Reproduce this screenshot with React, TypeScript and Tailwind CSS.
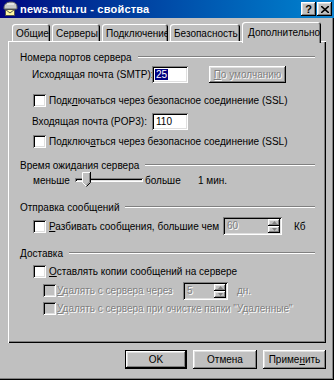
import React from 'react';

const raised = 'shadow-[inset_-1px_-1px_#000,inset_1px_1px_#fff,inset_-2px_-2px_#808080,inset_2px_2px_#dfdfdf]';
const sunken = 'shadow-[inset_1px_1px_#808080,inset_-1px_-1px_#fff,inset_2px_2px_#000,inset_-2px_-2px_#dfdfdf]';
const dis = 'text-[#808080] [text-shadow:1px_1px_0_#fff]';

function Check({ disabled = false }: { disabled?: boolean }) {
    return <div className={`w-[13px] h-[13px] shrink-0 ${disabled ? 'bg-[#c0c0c0]' : 'bg-white'} ${sunken}`} />;
}

function GroupLabel({ text }: { text: string }) {
    return (
        <div className="flex items-center h-[14px]">
            <span className="pr-[6px]">{text}</span>
            <div className="flex-1 h-[2px] border-t border-[#808080] border-b border-b-white" />
        </div>
    );
}

function Spinner({ value, w }: { value: string; w: string }) {
    return (
        <div className={`flex shrink-0 h-[18px] bg-[#c0c0c0] ${sunken} ${w} p-[2px]`}>
            <div className={`flex-1 pl-[2px] leading-[14px] ${dis}`}>{value}</div>
            <div className="flex flex-col w-[12px]">
                <div className={`flex-1 ${raised} flex items-center justify-center`}>
                    <svg width="5" height="3" viewBox="0 0 5 3"><path d="M2.5 0L5 3H0z" fill="#808080" /></svg>
                </div>
                <div className={`flex-1 ${raised} flex items-center justify-center`}>
                    <svg width="5" height="3" viewBox="0 0 5 3"><path d="M0 0H5L2.5 3z" fill="#808080" /></svg>
                </div>
            </div>
        </div>
    );
}

function Tab({ label, w, active = false }: { label: string; w: string; active?: boolean }) {
    return (
        <div
            className={`${w} shrink-0 whitespace-nowrap overflow-hidden rounded-t-[3px] bg-[#c0c0c0] shadow-[inset_1px_1px_#fff,inset_-1px_0_#000,inset_-2px_0_#808080] ${
                active ? 'h-[21px] relative z-10 -mb-[2px] pl-[6px] pt-[3px]' : 'h-[17px] pl-[4px] pt-[2px]'
            }`}
        >
            {label}
        </div>
    );
}

export default function App() {
    return (
        <div
            className="w-[334px] h-[380px] bg-[#c0c0c0] flex flex-col text-[10px] text-black whitespace-nowrap overflow-hidden shadow-[inset_-1px_-1px_#000,inset_-2px_-2px_#808080]"
            style={{ fontFamily: '"Liberation Sans", Arial, sans-serif' }}
        >
            {/* Title bar */}
            <div className="h-[18px] flex items-center bg-gradient-to-r from-[#000080] to-[#1084d0] pl-[2px] pr-[2px] shrink-0">
                <svg width="16" height="16" viewBox="0 0 16 16" className="shrink-0">
                    <path d="M2 7C2 3 5 1 9 1C13 1 15 3 15 6L15 8L2 8Z" fill="#c8c8c8" stroke="#606060" strokeWidth="1" />
                    <path d="M5 3H12" stroke="#fff" strokeWidth="1" />
                    <rect x="3.5" y="8.5" width="9" height="6" fill="#fff8a0" stroke="#505050" />
                    <path d="M3.5 8.5L8 12L12.5 8.5" fill="none" stroke="#505050" />
                </svg>
                <span className="ml-[2px] text-white font-bold text-[11px] tracking-[0.2px]">news.mtu.ru - свойства</span>
                <div className="ml-auto flex gap-[1px]">
                    <div className={`w-[15px] h-[14px] bg-[#c0c0c0] ${raised} flex items-center justify-center font-bold text-[11px] leading-none`}>?</div>
                    <div className={`w-[15px] h-[14px] bg-[#c0c0c0] ${raised} flex items-center justify-center`}>
                        <svg width="8" height="7" viewBox="0 0 8 7">
                            <path d="M0 0L8 7M8 0L0 7" stroke="#000" strokeWidth="1.6" />
                        </svg>
                    </div>
                </div>
            </div>

            <div className="flex flex-col px-[8px] pt-[4px]">
                {/* Tabs */}
                <div className="flex items-end h-[19px] pl-[4px] gap-[2px]">
                    <Tab label="Общие" w="w-[38px]" />
                    <Tab label="Серверы" w="w-[48px]" />
                    <Tab label="Подключение" w="w-[66px]" />
                    <Tab label="Безопасность" w="w-[70px]" />
                    <Tab label="Дополнительно" w="w-[79px]" active />
                </div>

                {/* Panel */}
                <div className="h-[302px] flex flex-col pl-[12px] pr-[11px] pt-[9px] shadow-[inset_1px_1px_#fff,inset_-1px_-1px_#000,inset_-2px_-2px_#808080]">
                    <GroupLabel text="Номера портов сервера" />
                    <div className="flex items-center h-[17px] mt-[2px] pl-[12px]">
                        <span className="w-[120px] shrink-0">Исходящая почта (SMTP):</span>
                        <div className={`w-[36px] h-[17px] shrink-0 bg-white ${sunken} p-[3px] flex items-center`}>
                            <span className="bg-[#000080] text-white leading-[11px] px-[1px]">25</span>
                        </div>
                        <div className={`ml-[21px] w-[77px] h-[17px] shrink-0 ${raised} flex items-center justify-center ${dis}`}>
                            <span><u>П</u>о умолчанию</span>
                        </div>
                    </div>
                    <div className="flex items-center h-[14px] mt-[10px] pl-[13px] gap-[3px]">
                        <Check />
                        <span>Подк<u>л</u>ючаться через безопасное соединение (SSL)</span>
                    </div>
                    <div className="flex items-center h-[17px] mt-[6px] pl-[12px]">
                        <span className="w-[120px] shrink-0">Входящая почта (POP3):</span>
                        <div className={`w-[36px] h-[17px] shrink-0 bg-white ${sunken} pl-[4px] flex items-center`}>110</div>
                    </div>
                    <div className="flex items-center h-[14px] mt-[4px] pl-[13px] gap-[3px]">
                        <Check />
                        <span>Подключ<u>а</u>ться через безопасное соединение (SSL)</span>
                    </div>

                    <div className="mt-[10px]">
                        <GroupLabel text="Время ожидания сервера" />
                    </div>
                    <div className="flex items-center h-[16px] pl-[13px]">
                        <span className="w-[42px] shrink-0">меньше</span>
                        <div className="relative w-[68px] h-[16px] shrink-0 flex items-center">
                            <div className="w-full h-[4px] shadow-[inset_1px_1px_#808080,inset_-1px_-1px_#fff,inset_2px_2px_#000,inset_-2px_-2px_#dfdfdf]" />
                            <svg width="9" height="15" viewBox="0 0 9 15" className="absolute left-[7px] top-0">
                                <path d="M0.5 0.5H8.5V10.5L4.5 14.5L0.5 10.5Z" fill="#c0c0c0" />
                                <path d="M0.5 10.5V0.5H8" fill="none" stroke="#fff" />
                                <path d="M8.5 0V10.5L4.5 14.5" fill="none" stroke="#000" />
                                <path d="M7.5 1V10L4.5 13" fill="none" stroke="#808080" />
                                <path d="M0.5 10.5L4 14" fill="none" stroke="#fff" />
                            </svg>
                        </div>
                        <span className="ml-[2px] w-[53px] shrink-0">больше</span>
                        <span>1 мин.</span>
                    </div>

                    <div className="mt-[12px]">
                        <GroupLabel text="Отправка сообщений" />
                    </div>
                    <div className="flex items-center h-[18px] mt-[3px] pl-[13px]">
                        <Check />
                        <span className="ml-[3px] w-[174px] shrink-0"><u>Р</u>азбивать сообщения, большие чем</span>
                        <Spinner value="60" w="w-[59px]" />
                        <span className="ml-[12px]">Кб</span>
                    </div>

                    <div className="mt-[11px]">
                        <GroupLabel text="Доставка" />
                    </div>
                    <div className="flex items-center h-[14px] mt-[4px] pl-[13px] gap-[3px]">
                        <Check />
                        <span><u>О</u>ставлять копии сообщений на сервере</span>
                    </div>
                    <div className="flex items-center h-[17px] mt-[4px] pl-[23px]">
                        <Check disabled />
                        <span className={`ml-[1px] w-[126px] shrink-0 ${dis}`}><u>У</u>далять с сервера через</span>
                        <Spinner value="5" w="w-[45px]" />
                        <span className={`ml-[9px] ${dis}`}>дн.</span>
                    </div>
                    <div className="flex items-center h-[14px] mt-[2px] pl-[23px] gap-[1px]">
                        <Check disabled />
                        <span className={dis}><u>У</u>далять с сервера при очистке папки "Удаленные"</span>
                    </div>
                </div>

                {/* Buttons */}
                <div className="flex justify-end gap-[6px] mt-[7px]">
                    <div className={`w-[62px] h-[19px] border border-black flex items-center justify-center ${raised}`}>OK</div>
                    <div className={`w-[64px] h-[19px] flex items-center justify-center ${raised}`}>Отмена</div>
                    <div className={`w-[63px] h-[19px] flex items-center justify-center ${raised}`}>Приме<u>н</u>ить</div>
                </div>
            </div>
        </div>
    );
}
